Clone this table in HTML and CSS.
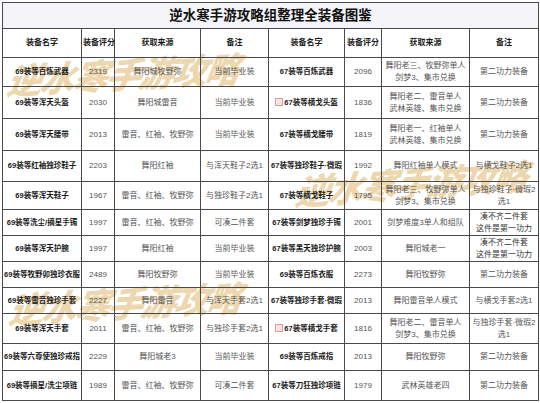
FILE: index.html
```html
<!DOCTYPE html>
<html lang="zh-CN">
<head>
<meta charset="utf-8">
<title>逆水寒手游攻略组整理全装备图鉴</title>
<link rel="stylesheet" href="styles.css">
</head>
<body>
<div class="sheet">
<table class="grid">
<colgroup>
<col class="c1"><col class="c2"><col class="c3"><col class="c4">
<col class="c5"><col class="c6"><col class="c7"><col class="c8">
</colgroup>
<tr class="r-title"><td colspan="8" class="title">逆水寒手游攻略组整理全装备图鉴</td></tr>
<tr class="r-head">
<th>装备名字</th><th>装备评分</th><th>获取来源</th><th>备注</th>
<th>装备名字</th><th>装备评分</th><th>获取来源</th><th>备注</th>
</tr>
<tr class="h29">
<td class="name">69装等百炼武器</td><td>2319</td><td>舞阳城牧野弥</td><td>当前毕业装</td>
<td class="name">67装等百炼武器</td><td>2096</td><td>舞阳老三、牧野弥单人<br>剑梦3、集市兑换</td><td>第二功力装备</td>
</tr>
<tr class="h33">
<td class="name">69装等浑天头盔</td><td>2030</td><td>舞阳城雷音</td><td>当前毕业装</td>
<td class="name"><span class="stamp"></span>67装等横戈头盔</td><td>1836</td><td>舞阳老二、雷音单人<br>武林英雄、集市兑换</td><td>第二功力装备</td>
</tr>
<tr class="h32">
<td class="name">69装等浑天腰带</td><td>2013</td><td>雷音、红袖、牧野弥</td><td>当前毕业装</td>
<td class="name">67装等横戈腰带</td><td>1819</td><td>舞阳老一、红袖单人<br>武林英雄、集市兑换</td><td>第二功力装备</td>
</tr>
<tr class="h31">
<td class="name">69装等红袖独珍鞋子</td><td>2203</td><td>舞阳红袖</td><td>与浑天鞋子2选1</td>
<td class="name">67装等独珍鞋子·微瑕</td><td>1992</td><td>舞阳红袖单人模式</td><td>与横戈鞋子2选1</td>
</tr>
<tr class="h28">
<td class="name">69装等浑天鞋子</td><td>1967</td><td>雷音、红袖、牧野弥</td><td>与独珍鞋子2选1</td>
<td class="name">67装等横戈鞋子</td><td>1795</td><td>舞阳老三、牧野弥单人<br>剑梦3、集市兑换</td><td>与独珍鞋子·微瑕2<br>选1</td>
</tr>
<tr class="h26">
<td class="name">69装等洗尘/摘星手镯</td><td>1997</td><td>雷音、红袖、牧野弥</td><td>可凑二件套</td>
<td class="name">67装等剑梦独珍手镯</td><td>2001</td><td>剑梦难度3单人和组队</td><td class="dark">凑不齐二件套<br>这件是第一功力</td>
</tr>
<tr class="h26">
<td class="name">69装等浑天护腕</td><td>1997</td><td>舞阳红袖</td><td>当前毕业装</td>
<td class="name">67装等黑天独珍护腕</td><td>2003</td><td>舞阳城老一</td><td class="dark">凑不齐二件套<br>这件是第一功力</td>
</tr>
<tr class="h26">
<td class="name">69装等牧野卯独珍衣服</td><td>2489</td><td>舞阳牧野弥</td><td>当前毕业装</td>
<td class="name">69装等百炼衣服</td><td>2273</td><td>舞阳牧野弥</td><td>第二功力装备</td>
</tr>
<tr class="h26">
<td class="name">69装等雷音独珍手套</td><td>2227</td><td>舞阳雷音</td><td>与浑天手套2选1</td>
<td class="name">67装等独珍手套·微瑕</td><td>2013</td><td>舞阳雷音单人模式</td><td>与横戈手套2选1</td>
</tr>
<tr class="h30">
<td class="name">69装等浑天手套</td><td>2011</td><td>雷音、红袖、牧野弥</td><td>与独珍手套2选1</td>
<td class="name"><span class="stamp"></span>67装等横戈手套</td><td>1816</td><td>舞阳老二、雷音单人<br>剑梦3、集市兑换</td><td>与独珍手套·微瑕2<br>选1</td>
</tr>
<tr class="h27">
<td class="name">69装等六尊使独珍戒指</td><td>2229</td><td>舞阳城老3</td><td>当前毕业装</td>
<td class="name">69装等百炼戒指</td><td>2013</td><td>舞阳牧野弥</td><td>第二功力装备</td>
</tr>
<tr class="h30">
<td class="name">69装等摘星/洗尘项链</td><td>1989</td><td>雷音、红袖、牧野弥</td><td>可凑二件套</td>
<td class="name">67装等刀狂独珍项链</td><td>1979</td><td>武林英雄老四</td><td>第二功力装备</td>
</tr>
</table>
<div class="mark mark-a">逆水寒手游攻略</div>
<div class="mark mark-b">逆水寒手游攻略</div>
<div class="mark mark-c">逆水寒手游攻略</div>
</div>
</body>
</html>
```

FILE: styles.css
```css
html, body {
  margin: 0;
  padding: 0;
  background: #ffffff;
}
body {
  font-family: "Liberation Sans", "Noto Sans CJK SC", sans-serif;
  color: #555;
}
.sheet {
  position: relative;
  padding: 2px 2px 0 2px;
  width: 536px;
  overflow: hidden;
  height: 401px;
}
.grid {
  width: 536px;
  table-layout: fixed;
  border-collapse: collapse;
  position: relative;
  z-index: 1;
}
.c1 { width: 79px; }
.c2 { width: 33px; }
.c3 { width: 86px; }
.c4 { width: 68px; }
.c5 { width: 76px; }
.c6 { width: 37px; }
.c7 { width: 88px; }
.c8 { width: 69px; }
.grid td, .grid th {
  border: 1px solid #4a4a4a;
  padding: 0 1px;
  text-align: center;
  vertical-align: middle;
  font-size: 8px;
  line-height: 12px;
  white-space: nowrap;
}
.grid th {
  font-weight: bold;
  color: #1a1a1a;
}
.r-title { height: 26px; }
.r-head { height: 29px; }
.title {
  background: #f5f5f9;
  font-size: 13.5px !important;
  font-weight: bold;
  color: #111;
}
.grid td.name {
  font-weight: bold;
  color: #1a1a1a;
  font-size: 7.5px;
}
.grid td.dark { color: #333; }
.h26 { height: 26px; }
.h27 { height: 27px; }
.h28 { height: 28px; }
.h29 { height: 29px; }
.h30 { height: 30px; }
.h31 { height: 31px; }
.h32 { height: 32px; }
.h33 { height: 32px; }
.stamp {
  display: inline-block;
  width: 6px;
  height: 6px;
  border: 1px solid #e79a9a;
  background: #fbe3e3;
  margin-right: 1px;
  vertical-align: -1px;
}
.mark {
  position: absolute;
  z-index: 0;
  pointer-events: none;
  font-family: "Noto Sans CJK SC", sans-serif;
  font-weight: 900;
  font-size: 35px;
  line-height: 40px;
  white-space: nowrap;
  color: #d9a84e;
  opacity: 0.45;
  font-style: italic;
  letter-spacing: -2px;
}
.mark-a {
  left: 8px;
  top: 53px;
  transform: rotate(-3deg) skewX(-12deg);
}
.mark-b {
  left: 296px;
  top: 162px;
  transform: rotate(-4deg) skewX(-12deg);
}
.mark-c {
  left: 10px;
  top: 282px;
  transform: rotate(-3deg) skewX(-12deg);
}
```
